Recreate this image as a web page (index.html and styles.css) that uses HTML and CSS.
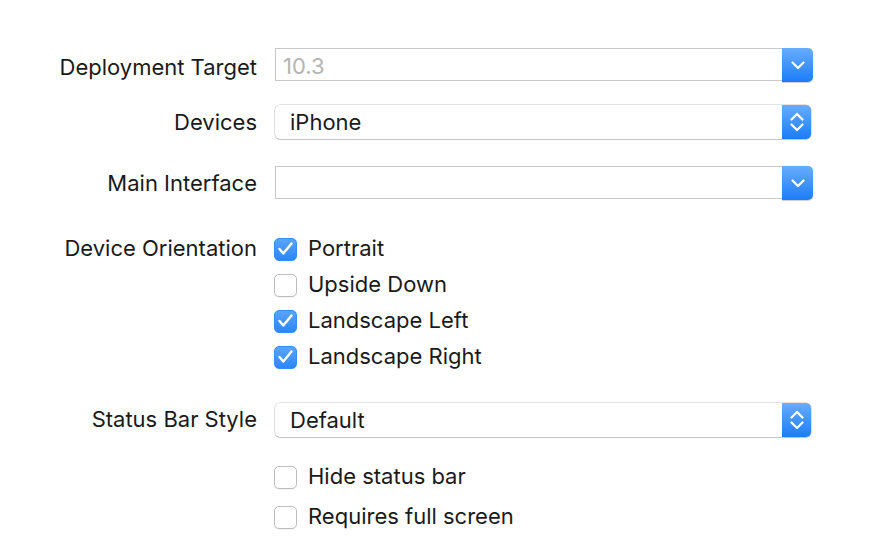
FILE: index.html
```html
<!DOCTYPE html>
<html>
<head>
<meta charset="utf-8">
<link rel="stylesheet" href="styles.css">
</head>
<body>
<div class="form">
  <div class="row r1">
    <div class="label lcombo">Deployment Target</div>
    <div class="combo">
      <div class="field placeholder">10.3</div>
      <div class="btn">
        <svg width="14" height="9" viewBox="0 0 14 9"><path d="M1.5 1.5 L7 7 L12.5 1.5" fill="none" stroke="#fff" stroke-width="2.2" stroke-linecap="round" stroke-linejoin="round"/></svg>
      </div>
    </div>
  </div>
  <div class="row r2">
    <div class="label">Devices</div>
    <div class="popup">
      <div class="ptext">iPhone</div>
      <div class="btn pbtn">
        <svg width="14" height="20" viewBox="0 0 14 20"><path d="M1.5 7.5 L7 2 L12.5 7.5 M1.5 12.5 L7 18 L12.5 12.5" fill="none" stroke="#fff" stroke-width="2.2" stroke-linecap="round" stroke-linejoin="round"/></svg>
      </div>
    </div>
  </div>
  <div class="row r3">
    <div class="label">Main Interface</div>
    <div class="combo">
      <div class="field"></div>
      <div class="btn">
        <svg width="14" height="9" viewBox="0 0 14 9"><path d="M1.5 1.5 L7 7 L12.5 1.5" fill="none" stroke="#fff" stroke-width="2.2" stroke-linecap="round" stroke-linejoin="round"/></svg>
      </div>
    </div>
  </div>
  <div class="row r4 top">
    <div class="label lcheck">Device Orientation</div>
    <div class="checks orient">
      <div class="check"><span class="box on"><svg width="23" height="23" viewBox="0 0 23 23"><path d="M5.5 11 L9.3 15.5 L17.5 5.5" fill="none" stroke="#fff" stroke-width="2.4" stroke-linecap="round" stroke-linejoin="round"/></svg></span><span class="ctext">Portrait</span></div>
      <div class="check"><span class="box"></span><span class="ctext">Upside Down</span></div>
      <div class="check"><span class="box on"><svg width="23" height="23" viewBox="0 0 23 23"><path d="M5.5 11 L9.3 15.5 L17.5 5.5" fill="none" stroke="#fff" stroke-width="2.4" stroke-linecap="round" stroke-linejoin="round"/></svg></span><span class="ctext">Landscape Left</span></div>
      <div class="check"><span class="box on"><svg width="23" height="23" viewBox="0 0 23 23"><path d="M5.5 11 L9.3 15.5 L17.5 5.5" fill="none" stroke="#fff" stroke-width="2.4" stroke-linecap="round" stroke-linejoin="round"/></svg></span><span class="ctext">Landscape Right</span></div>
    </div>
  </div>
  <div class="row r5">
    <div class="label lstatus">Status Bar Style</div>
    <div class="popup">
      <div class="ptext">Default</div>
      <div class="btn pbtn">
        <svg width="14" height="20" viewBox="0 0 14 20"><path d="M1.5 7.5 L7 2 L12.5 7.5 M1.5 12.5 L7 18 L12.5 12.5" fill="none" stroke="#fff" stroke-width="2.2" stroke-linecap="round" stroke-linejoin="round"/></svg>
      </div>
    </div>
  </div>
  <div class="row r6 top">
    <div class="label"></div>
    <div class="checks status">
      <div class="check"><span class="box"></span><span class="ctext">Hide status bar</span></div>
      <div class="check"><span class="box"></span><span class="ctext">Requires full screen</span></div>
    </div>
  </div>
</div>
</body>
</html>
```
FILE: styles.css
```css
html, body {
  margin: 0;
  padding: 0;
  background: #ffffff;
}
body {
  width: 888px;
  height: 552px;
  overflow: hidden;
  font-family: Inter, "Liberation Sans", sans-serif;
  font-size: 22px;
  color: #1a1a1a;
}
.form {
  display: flex;
  flex-direction: column;
  padding-top: 48px;
}
.row {
  display: flex;
  align-items: center;
  height: 34px;
}
.row.top {
  align-items: flex-start;
  height: auto;
}
.r2 { margin-top: 23px; }
.r3 { margin-top: 27px; }
.r4 { margin-top: 37px; }
.r5 { margin-top: 34px; }
.r6 { margin-top: 28px; }
.label {
  width: 257px;
  flex: none;
  text-align: right;
  margin-right: 18px;
  white-space: nowrap;
}
.lcombo {
  padding-top: 4px;
}
.lstatus {
  padding-bottom: 3px;
}
.lcheck {
  line-height: 24px;
  padding-bottom: 2px;
  margin-top: -1px;
}
.combo {
  display: flex;
  width: 538px;
  height: 34px;
}
.field {
  flex: 1;
  height: 31px;
  border: 1px solid #c9c9c9;
  border-right: none;
  background: #fff;
  padding-left: 7px;
  line-height: 34px;
  box-sizing: content-box;
}
.placeholder {
  color: #b4b4b4;
}
.btn {
  width: 31px;
  height: 34px;
  flex: none;
  border-radius: 0 5px 5px 0;
  background: linear-gradient(#68acfc, #1c7df8);
  display: flex;
  align-items: center;
  justify-content: center;
  box-shadow: 0 0.5px 1px rgba(0,0,0,0.2);
}
.popup {
  display: flex;
  width: 536px;
  height: 34px;
  border-radius: 5px;
  box-shadow: 0 0 0 0.5px rgba(0,0,0,0.22), 0 1px 1px rgba(0,0,0,0.14);
}
.ptext {
  flex: 1;
  padding-left: 15px;
  line-height: 34px;
}
.pbtn {
  width: 29px;
  box-shadow: none;
}
.checks {
  display: flex;
  flex-direction: column;
}
.orient { gap: 12px; }
.status { gap: 16px; }
.check {
  display: flex;
  align-items: center;
  height: 24px;
}
.box {
  width: 21px;
  height: 21px;
  border: 1px solid #bdbdbd;
  border-radius: 5px;
  background: #fff;
  margin-right: 11px;
  margin-left: -1px;
  flex: none;
  position: relative;
  box-shadow: 0 0.5px 0.5px rgba(0,0,0,0.08);
}
.box.on {
  border-color: #3a8cf5;
  background: linear-gradient(#5aa3fb, #2d86f7);
}
.box svg {
  position: absolute;
  left: -1px;
  top: -1px;
}
.ctext {
  line-height: 24px;
  padding-bottom: 2px;
}
```
